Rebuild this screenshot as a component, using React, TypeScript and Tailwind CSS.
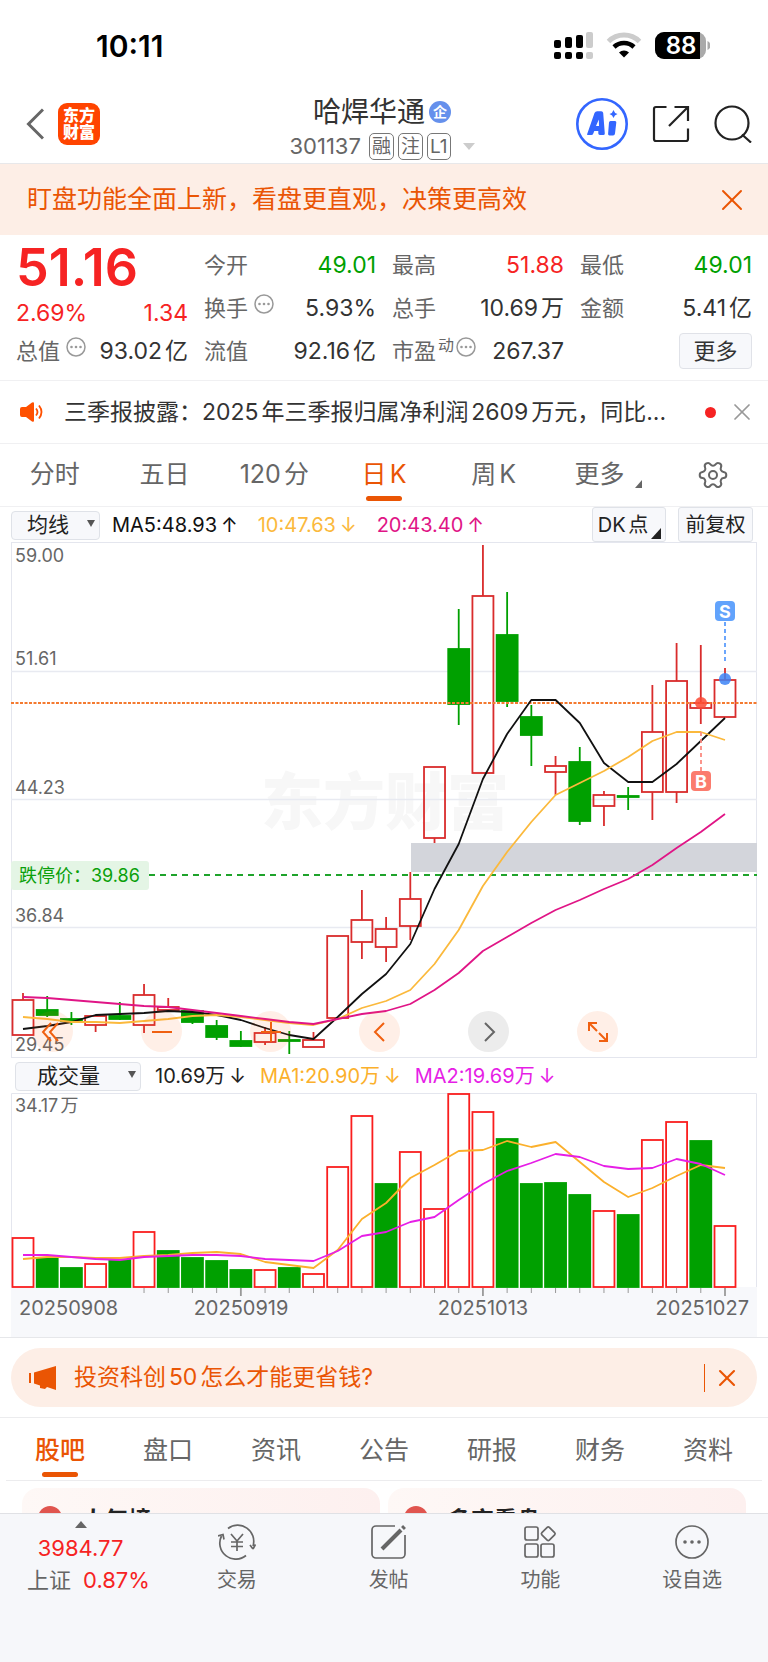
import type { ReactNode } from "react";
import { Settings, X } from "lucide-react";

type Candle = [top: number, bottom: number, high: number, low: number, up: boolean];

const CANDLES: Candle[] = [
  [458, 493, 451, 493, true],
  [468, 473, 454, 475, false],
  [477, 479, 470, 483, false],
  [474, 483, 474, 490, true],
  [474, 477, 460, 478, false],
  [453, 483, 442, 491, true],
  [465, 468, 456, 470, true],
  [469, 480, 468, 482, false],
  [484, 495, 478, 498, false],
  [499, 504, 489, 505, false],
  [491, 500, 485, 503, true],
  [498, 499, 489, 512, false],
  [498, 505, 490, 505, true],
  [394, 476, 394, 476, true],
  [378, 400, 348, 417, true],
  [387, 405, 375, 420, true],
  [357, 384, 330, 398, true],
  [225, 296, 225, 301, true],
  [107, 162, 67, 183, false],
  [54, 231, 3, 231, true],
  [93, 159, 50, 165, false],
  [175, 193, 163, 224, false],
  [224, 230, 214, 253, true],
  [220, 279, 205, 283, false],
  [253, 264, 249, 284, true],
  [254, 255, 245, 268, false],
  [190, 250, 143, 278, true],
  [139, 250, 101, 261, true],
  [161, 166, 103, 182, true],
  [138, 175, 126, 175, true],
];

const MA5 = [
  487, 484, 480, 473, 472, 471, 469, 470, 473, 478, 486, 493, 497, 475, 452, 432, 402, 347, 302, 237,
  192, 158, 158, 181, 221, 240, 240, 222, 199, 176,
];
const MA10 = [
  475, 477, 480, 480, 481, 479, 477, 474, 473, 475, 478, 481, 483, 477, 466, 459, 448, 422, 388, 344,
  310, 280, 253, 241, 229, 215, 199, 190, 190, 198,
];
const MA20 = [
  455, 456, 458, 460, 462, 464, 465, 468, 471, 474, 477, 480, 482, 477, 472, 469, 462, 448, 431, 409,
  395, 381, 368, 358, 347, 337, 323, 306, 290, 272,
];

const VOLUMES: [top: number, up: boolean][] = [
  [145, true], [165, false], [175, false], [171, true], [167, false], [139, true],
  [158, false], [165, false], [168, false], [177, false], [177, true], [175, false],
  [181, true], [74, true], [23, true], [91, false], [59, true], [116, true],
  [1, true], [19, true], [46, false], [91, false], [90, false], [102, false],
  [118, true], [122, false], [47, true], [29, true], [48, false], [133, true],
];
const VMA1 = [
  166, 164, 164, 165, 165, 163, 162, 160, 159, 161, 169, 172, 175, 157, 126, 110, 85, 72, 58, 57, 48,
  54, 49, 69, 89, 104, 95, 83, 72, 75,
];
const VMA2 = [
  162, 162, 164, 166, 167, 164, 163, 162, 162, 163, 166, 167, 168, 158, 143, 139, 129, 124, 107, 91,
  78, 70, 61, 64, 73, 76, 75, 66, 71, 82,
];

const xAt = (i: number) => 12 + (i * 702) / 29;
const toPoints = (ys: number[]) => ys.map((y, i) => `${xAt(i).toFixed(1)},${y}`).join(" ");

function StatusBar() {
  return (
    <div className="flex h-20 items-center justify-between pt-3 pr-[58px] pl-24">
      <span className="text-[30px] font-semibold text-black">10:11</span>
      <svg width="156" height="28" viewBox="0 0 156 28" aria-label="信号和电量">
        <rect x="0" y="8" width="7" height="8" rx="2" />
        <rect x="11" y="5" width="7" height="11" rx="2" />
        <rect x="22" y="3" width="7" height="13" rx="2" />
        <rect x="32" y="0" width="7" height="16" rx="2" fill="#ccc" />
        <rect x="0" y="20" width="7" height="7" rx="2" />
        <rect x="11" y="20" width="7" height="7" rx="2" />
        <rect x="22" y="20" width="7" height="7" rx="2" />
        <rect x="32" y="20" width="7" height="7" rx="2" fill="#ccc" />
        <path d="M54.5 9.5a22 22 0 0 1 31 0" fill="none" stroke="#ccc" strokeWidth="5" />
        <path d="M60 15a14.5 14.5 0 0 1 20 0" fill="none" stroke="#000" strokeWidth="4.5" />
        <path d="M65 20.5a7.5 7.5 0 0 1 10 0l-5 5z" />
        <rect x="101" y="0" width="51" height="27" rx="9" fill="#aaa" />
        <path d="M110 0h36v27h-36a9 9 0 0 1-9-9V9a9 9 0 0 1 9-9z" />
        <path d="M153.500 9q3 1.500 3 4.500t-3 4.500z" fill="#aaa" />
        <text x="127" y="22" textAnchor="middle" fontSize="24" fontWeight="600" fill="#fff">
          88
        </text>
      </svg>
    </div>
  );
}

function Tag({ children }: { children: ReactNode }) {
  return (
    <span className="flex h-[27px] items-center rounded-[5px] border border-[#777] px-[2px] text-[19px] leading-none text-[#666]">
      {children}
    </span>
  );
}

function Header() {
  return (
    <header className="grid h-21 grid-cols-[1fr_auto_1fr] items-center border-b border-[#e8e8ea] pt-1 pr-4 pl-3">
      <div className="flex items-center gap-[14px] pl-[14px]">
        <button aria-label="返回">
          <svg width="18" height="32" viewBox="0 0 18 32" fill="none" stroke="#666" strokeWidth="3">
            <path d="M17 1.500 2.500 16 17 30.500" />
          </svg>
        </button>
        <div className="grid size-[42px] place-content-center rounded-[9px] bg-[#ff4400] text-center text-base leading-[17px] font-black text-white">
          东方
          <br />
          财富
        </div>
      </div>
      <div className="flex flex-col items-center gap-[2px] pt-2">
        <h1 className="flex h-9 items-center gap-1 text-[28px] text-[#333]">
          哈焊华通
          <span className="grid size-[22px] place-content-center rounded-full bg-[#6590ec] text-sm leading-none font-bold text-white">
            企
          </span>
        </h1>
        <div className="flex h-[30px] items-center gap-1 text-[22px] text-[#666]">
          <span className="mr-1">301137</span>
          <Tag>融</Tag>
          <Tag>注</Tag>
          <Tag>L1</Tag>
          <svg className="ml-2" width="12" height="7" viewBox="0 0 12 7" fill="#ccc">
            <path d="M0 0h12L6 7z" />
          </svg>
        </div>
      </div>
      <div className="flex items-center justify-end gap-6">
        <button aria-label="AI">
          <svg width="52" height="52" viewBox="0 0 52 52">
            <circle cx="26" cy="26" r="24.700" fill="none" stroke="#3366ff" strokeWidth="2.600" />
            <path
              fill="#3366ff"
              fillRule="evenodd"
              d="M11 36.500 18.500 15q.8-1.800 2.700-1.800h4q1.800 0 2 1.800l1.600 20.500q0 1.500-1.500 1.500h-3.500q-1.400 0-1.500-1.400V33h-4l-1 2.500q-.5 1.500-2 1.500H12q-1.300 0-1-1.500zM20 28h3l-.2-6.500z"
            />
            <path fill="#3366ff" d="M34.500 23h4.500q1.500 0 1.300 1.500L39 35.500q-.2 2-2 2h-3.500q-1.600 0-1.400-1.700L33 24.500q.2-1.500 1.500-1.500zM37.500 12q.8 3.200 4 4-3.200.8-4 4-.8-3.200-4-4 3.200-.8 4-4z" />
          </svg>
        </button>
        <button aria-label="分享">
          <svg width="38" height="38" viewBox="0 0 38 38" fill="none" stroke="#222" strokeWidth="2.200">
            <path d="M14.500 2H4a2 2 0 0 0-2 2v30a2 2 0 0 0 2 2h30a2 2 0 0 0 2-2V23.500M22.500 2H36v14M36 2 17 21" />
          </svg>
        </button>
        <button aria-label="搜索">
          <svg width="38" height="38" viewBox="0 0 38 38" fill="none" stroke="#222" strokeWidth="2.200">
            <circle cx="18" cy="18" r="16.500" />
            <path d="M28 29.500 37 37.500" />
          </svg>
        </button>
      </div>
    </header>
  );
}

function MoreDots() {
  return (
    <svg className="mb-2" width="20" height="20" viewBox="0 0 20 20" fill="#999">
      <circle cx="10" cy="10" r="9" fill="none" stroke="#999" strokeWidth="1.500" />
      <circle cx="5.500" cy="10" r="1.300" />
      <circle cx="10" cy="10" r="1.300" />
      <circle cx="14.500" cy="10" r="1.300" />
    </svg>
  );
}

function Stat({
  label,
  value,
  color = "text-[#333]",
  dots = false,
  sup,
}: {
  label: string;
  value: string;
  color?: string;
  dots?: boolean;
  sup?: string;
}) {
  return (
    <div className="flex h-[43px] items-center justify-between whitespace-nowrap">
      <span className="flex items-center text-[#666]">
        {label}
        {sup && <span className="mb-3 ml-[2px] text-base">{sup}</span>}
        {dots && (
          <span className={sup ? "ml-[2px]" : "ml-[6px]"}>
            <MoreDots />
          </span>
        )}
      </span>
      <span className={`text-[23px] ${color}`}>{value}</span>
    </div>
  );
}

function Quotes() {
  return (
    <section className="grid grid-cols-4 gap-x-4 border-b border-[#f0f0f2] px-4 py-2 text-[22px] leading-8">
      <div>
        <div className="h-[54px] text-[52px] leading-[50px] font-semibold text-[#f62323]">51.16</div>
        <div className="flex h-8 items-center justify-between text-[23px] text-[#f62323]">
          <span>2.69%</span>
          <span>1.34</span>
        </div>
        <Stat label="总值" value="93.02亿" dots />
      </div>
      <div>
        <Stat label="今开" value="49.01" color="text-[#00a000]" />
        <Stat label="换手" value="5.93%" dots />
        <Stat label="流值" value="92.16亿" />
      </div>
      <div>
        <Stat label="最高" value="51.88" color="text-[#f62323]" />
        <Stat label="总手" value="10.69万" />
        <Stat label="市盈" value="267.37" sup="动" dots />
      </div>
      <div>
        <Stat label="最低" value="49.01" color="text-[#00a000]" />
        <Stat label="金额" value="5.41亿" />
        <div className="flex justify-end pt-1">
          <button className="h-9 w-[73px] rounded-[4px] border border-[#e0e2e8] bg-[#f7f8fb] text-[#333]">
            更多
          </button>
        </div>
      </div>
    </section>
  );
}

function News() {
  return (
    <div className="flex h-[63px] items-center border-b border-[#f0f0f2] pr-3 pl-5">
      <svg className="mr-5 shrink-0" width="24" height="20" viewBox="0 0 24 20" fill="#ff5000">
        <path d="M2 5h4l6-4.500q2-1 2 1v17q0 2-2 1L6 15H2q-2 0-2-2V7q0-2 2-2z" />
        <path d="M16 6.500q3 3.500 0 7M19 3.500q5 6.500 0 13" fill="none" stroke="#ff5000" strokeWidth="1.800" />
      </svg>
      <a href="#news" className="flex-1 truncate text-[23px] text-[#333]">
        三季报披露：2025年三季报归属净利润2609万元，同比...
      </a>
      <span className="mr-3 size-[11px] rounded-full bg-[#f62323]" />
      <button aria-label="关闭公告">
        <X className="size-7 text-[#999]" strokeWidth={1.5} />
      </button>
    </div>
  );
}

function PeriodTabs() {
  const tab = "relative flex items-center justify-center";
  return (
    <nav className="grid h-[63px] grid-cols-7 border-b border-[#f0f0f2] text-[25px] text-[#666]">
      <button className={tab}>分时</button>
      <button className={tab}>五日</button>
      <button className={tab}>120分</button>
      <button className={`${tab} text-[#ea5504]`}>
        日K
        <span className="absolute bottom-[5px] h-[5px] w-9 rounded-full bg-[#ea5504]" />
      </button>
      <button className={tab}>周K</button>
      <button className={`${tab} pr-2`}>
        更多
        <svg className="absolute right-4 bottom-[18px]" width="7" height="8" viewBox="0 0 7 8" fill="#666">
          <path d="M7 0v8H0z" />
        </svg>
      </button>
      <button className={tab} aria-label="设置">
        <Settings className="size-8 rotate-90 text-[#666]" strokeWidth={1.5} />
      </button>
    </nav>
  );
}

function IndicatorSelect({ label, value, wide = false }: { label: string; value: string; wide?: boolean }) {
  return (
    <div className={`relative h-[29px] shrink-0 ${wide ? "w-[126px]" : "w-[89px]"}`}>
      <select
        aria-label={label}
        className={`size-full appearance-none rounded-[4px] border border-[#dfe2e8] bg-[#f7f8fb] text-[21px] leading-[26px] text-[#222] ${
          wide ? "pl-[21px]" : "pl-[15px]"
        }`}
      >
        <option>{value}</option>
      </select>
      <svg
        className="pointer-events-none absolute top-[10px] right-[5px]"
        width="8"
        height="7"
        viewBox="0 0 8 7"
        fill="#555"
      >
        <path d="M0 0h8L4 7z" />
      </svg>
    </div>
  );
}

function Reading({ text, arrow, color }: { text: string; arrow: string; color: string }) {
  return (
    <span className={`flex gap-1 ${color}`}>
      <span>{text}</span>
      <span>{arrow}</span>
    </span>
  );
}

function PriceChart() {
  const round = "grid size-[41px] place-content-center rounded-full bg-[#ff6010]/10 text-[#f06010]";
  const icon = { width: 24, height: 24, viewBox: "0 0 24 24", fill: "none", stroke: "currentColor", strokeWidth: 2 };
  return (
    <div className="relative mx-[11px]">
      <svg className="block h-auto w-full" viewBox="0 0 746 516" fontSize="18" fill="#666">
        <rect x="0.500" y="0.500" width="745" height="515" fill="#fff" stroke="#e4e6ee" />
        <text x="250" y="283" fontSize="62" fontWeight="900" fill="#f7f7f7">
          东方财富
        </text>
        <path d="M0 129.500H746M0 257.500H746M0 385.500H746" stroke="#e8eaf1" strokeWidth="1.500" />
        <rect x="400" y="301" width="346" height="29" fill="#d3d5db" />
        <path d="M138 333H746" stroke="#1fa32b" strokeWidth="2" strokeDasharray="6 5" />
        {CANDLES.map(([top, bottom, high, low, up], i) => {
          const x = xAt(i);
          const color = up ? "#d92c2c" : "#00a000";
          return (
            <g key={i} stroke={color} strokeWidth="1.800">
              <path d={`M${x} ${high}V${top}M${x} ${bottom}V${low}`} />
              <rect x={x - 10.5} y={top} width="21" height={bottom - top} fill={up ? "none" : color} />
            </g>
          );
        })}
        <path d="M0 161H746" stroke="#f47a30" strokeWidth="1.800" strokeDasharray="3 1.500" />
        <g fill="none" strokeWidth="1.800" strokeLinejoin="round">
          <polyline points={toPoints(MA5)} stroke="#111" />
          <polyline points={toPoints(MA10)} stroke="#fbb93c" />
          <polyline points={toPoints(MA20)} stroke="#e01586" />
        </g>
        <text x="4" y="20">59.00</text>
        <text x="4" y="123">51.61</text>
        <text x="4" y="252">44.23</text>
        <text x="4" y="380">36.84</text>
        <text x="4" y="509">29.45</text>
        <rect x="0" y="319" width="138" height="29" rx="3" fill="#e4f5e5" />
        <text x="8" y="340" fill="#0aa00a">
          跌停价：39.86
        </text>
        {/* buy / sell marks */}
        <path d="M714 80V119" stroke="#5c9dfc" strokeWidth="1.800" strokeDasharray="4 3" />
        <circle cx="714" cy="137" r="6" fill="#3c82f6" fillOpacity="0.85" />
        <rect x="704" y="59" width="20" height="20" rx="4" fill="#62a3fc" />
        <path d="M690 190V229" stroke="#fb8a80" strokeWidth="1.800" strokeDasharray="4 3" />
        <circle cx="690" cy="161" r="6" fill="#fb4a34" fillOpacity="0.85" />
        <rect x="680" y="229" width="20" height="20" rx="4" fill="#fb7c6e" />
        <g fill="#fff" fontWeight="700" textAnchor="middle">
          <text x="714" y="76">S</text>
          <text x="690" y="246">B</text>
        </g>
      </svg>
      <div className="absolute bottom-[6px] left-[21px] flex gap-[68px]">
        <button className={round} aria-label="最早">
          <svg {...icon}>
            <path d="M10 3 2 12l8 9M17 3 9 12l8 9" />
          </svg>
        </button>
        <button className={round} aria-label="缩小">
          <svg {...icon}>
            <path d="M2 12h20" />
          </svg>
        </button>
        <button className={round} aria-label="放大">
          <svg {...icon}>
            <path d="M2 12h20M12 2v20" />
          </svg>
        </button>
        <button className={round} aria-label="向前">
          <svg {...icon}>
            <path d="M16 3 7 12l9 9" />
          </svg>
        </button>
        <button className="grid size-[41px] place-content-center rounded-full bg-[#ececec] text-[#666]" aria-label="向后">
          <svg {...icon}>
            <path d="m8 3 9 9-9 9" />
          </svg>
        </button>
        <button className={round} aria-label="全屏">
          <svg {...icon}>
            <path d="M11 3H3v8M3 3l8 8M21 13v8h-8M21 21l-8-8" />
          </svg>
        </button>
      </div>
    </div>
  );
}

function VolumeChart() {
  return (
    <div className="border-b border-[#e6e7ea] px-[11px]">
      <svg className="block h-auto w-full" viewBox="0 0 746 244" fontSize="20" fill="#666">
        <path d="M.5 194V.5H745.500V194" fill="none" stroke="#e4e6ee" />
        <rect x="0" y="194" width="746" height="50" fill="#f7f8fb" />
        <text className="[text-autospace:normal]" x="4" y="19" fontSize="18">
          34.17万
        </text>
        {VOLUMES.map(([top, up], i) => (
          <g key={i}>
            <rect
              x={xAt(i) - 10.5}
              y={top}
              width="21"
              height={194 - top}
              fill={up ? "#fff" : "#00a000"}
              stroke={up ? "#fa1e1e" : "#00a000"}
              strokeWidth="1.800"
            />
            {i > 4 && (
              <path
                d={`M${xAt(i)} 195v${i % 10 === 9 ? 8 : 5}`}
                stroke="#999"
                strokeWidth={i % 10 === 9 ? 1.8 : 1}
              />
            )}
          </g>
        ))}
        <g fill="none" strokeWidth="1.800" strokeLinejoin="round">
          <polyline points={toPoints(VMA1)} stroke="#fbb02c" />
          <polyline points={toPoints(VMA2)} stroke="#e61ee6" />
        </g>
        <text x="8" y="222">20250908</text>
        <text x="230" y="222" textAnchor="middle">20250919</text>
        <text x="472" y="222" textAnchor="middle">20251013</text>
        <text x="738" y="222" textAnchor="end">20251027</text>
      </svg>
    </div>
  );
}

function ChartSection() {
  const chip = "relative h-[35px] rounded-[3px] border border-[#dfe2e8] bg-[#f7f8fb] text-[20px] text-[#222]";
  return (
    <section>
      <div className="flex h-[35px] items-center pr-[15px] pl-[11px] text-[20px] whitespace-nowrap">
        <IndicatorSelect label="主图指标" value="均线" />
        <div className="ml-3 flex flex-1 gap-5">
          <Reading text="MA5:48.93" arrow="↑" color="text-[#111]" />
          <Reading text="10:47.63" arrow="↓" color="text-[#fbb93c]" />
          <Reading text="20:43.40" arrow="↑" color="text-[#e01586]" />
        </div>
        <button className={`${chip} mr-3 w-[74px] pr-3 [text-autospace:normal]`}>
          DK点
          <svg className="absolute right-1 bottom-[2px]" width="10" height="11" viewBox="0 0 10 11" fill="#222">
            <path d="M10 0v11H0z" />
          </svg>
        </button>
        <button className={`${chip} w-[75px]`}>前复权</button>
      </div>
      <PriceChart />
      <div className="flex h-[35px] items-center gap-[14px] pl-[15px] text-[20px] whitespace-nowrap">
        <IndicatorSelect label="副图指标" value="成交量" wide />
        <Reading text="10.69万" arrow="↓" color="text-[#222]" />
        <Reading text="MA1:20.90万" arrow="↓" color="text-[#fbb02c]" />
        <Reading text="MA2:19.69万" arrow="↓" color="text-[#e61ee6]" />
      </div>
      <VolumeChart />
    </section>
  );
}

function Promo() {
  return (
    <div className="border-b border-[#ececee] px-[11px] py-[10px]">
      <div className="flex h-[59px] items-center rounded-full bg-[#fdeee6] pr-4 pl-[18px] text-[#ea5504]">
        <svg width="27" height="24" viewBox="0 0 27 24" fill="#ea5504">
          <path d="M0 7h2v10H0zM5 6.500 27 0v24l-9-3-2 2-5-1v-2.500L5 17.500z" />
        </svg>
        <a href="#promo" className="ml-[18px] flex-1 text-[23px] [text-autospace:normal]">
          投资科创50怎么才能更省钱?
        </a>
        <span className="mr-2 h-7 w-px bg-[#ea5504]" />
        <button aria-label="关闭推广">
          <X className="size-7" strokeWidth={1.8} />
        </button>
      </div>
    </div>
  );
}

function InfoTabs() {
  return (
    <nav className="mx-[6px] grid h-[63px] grid-cols-7 border-b border-[#ececee] text-[25px] text-[#666]">
      <button className="relative flex items-center justify-center pt-1 font-medium text-[#ea5504]">
        股吧
        <span className="absolute bottom-[3px] h-[5px] w-9 rounded-full bg-[#ea5504]" />
      </button>
      {["盘口", "资讯", "公告", "研报", "财务", "资料"].map((name) => (
        <button key={name} className="pt-1">
          {name}
        </button>
      ))}
    </nav>
  );
}

function BoardCards() {
  return (
    <div className="grid h-8 grid-cols-2 gap-2 overflow-hidden px-[22px] pt-[7px]">
      {["人气榜", "多空看盘"].map((title) => (
        <div
          key={title}
          className="flex h-20 items-start gap-5 rounded-2xl bg-linear-to-r from-[#fef8f6] to-[#fdf0ef] px-4 pt-[18px]"
        >
          <span className="size-6 rounded-full bg-[#e0554f]" />
          <span className="text-[23px] leading-7 font-bold text-[#222]">{title}</span>
        </div>
      ))}
    </div>
  );
}

function NavItem({ label, children }: { label: string; children: ReactNode }) {
  return (
    <button className="flex flex-1 flex-col items-center gap-[7px] pt-[10px]">
      <svg width="38" height="36" viewBox="0 0 38 36" fill="none" stroke="#666" strokeWidth="1.700">
        {children}
      </svg>
      <span className="text-[20px] leading-[26px]">{label}</span>
    </button>
  );
}

function BottomBar() {
  return (
    <footer className="flex h-[149px] items-start border-t border-[#e0e1e5] bg-[#f6f7fa] text-[#666]">
      <button className="flex w-[161px] flex-col items-center pt-[7px] text-[22px] leading-8">
        <svg width="12" height="7" viewBox="0 0 12 7" fill="#666">
          <path d="M6 0l6 7H0z" />
        </svg>
        <span className="mt-1 text-[#f62323]">3984.77</span>
        <span className="flex gap-3 pl-4">
          上证 <span className="text-[#f62323]">0.87%</span>
        </span>
      </button>
      <NavItem label="交易">
        <path d="M10 4.500A16 16 0 0 1 35 22M35 25l-3-4M35 25l2.500-4.500M28 31.500A16 16 0 0 1 3.500 12M0 12l5-1.500 1 5" />
        <path d="m13 10 6 7 6-7M19 17v10M13 18h12M13 22.500h12" />
      </NavItem>
      <NavItem label="发帖">
        <path d="M25 2H6a4 4 0 0 0-4 4v24a4 4 0 0 0 4 4h25a4 4 0 0 0 4-4V11" />
        <path d="M12 25 31 6" strokeWidth="4" />
        <path d="m32.500 4.500 2-2" strokeWidth="4" />
      </NavItem>
      <NavItem label="功能">
        <rect x="4" y="3" width="13" height="13" rx="2" />
        <rect x="4" y="20" width="13" height="13" rx="2" />
        <rect x="20" y="20" width="13" height="13" rx="2" />
        <rect x="22" y="4.500" width="10.500" height="10.500" rx="1.500" transform="rotate(45 27.250 9.750)" />
      </NavItem>
      <NavItem label="设自选">
        <circle cx="19" cy="18" r="16" />
        <g fill="#666" stroke="none">
          <circle cx="12" cy="18" r="1.800" />
          <circle cx="19" cy="18" r="1.800" />
          <circle cx="26" cy="18" r="1.800" />
        </g>
      </NavItem>
    </footer>
  );
}

export default function App() {
  return (
    <main className="min-h-screen bg-white font-[Inter,'Noto_Sans_CJK_SC',sans-serif]">
      <StatusBar />
      <Header />
      <div className="flex h-[71px] items-center justify-between bg-[#fdeee6] pr-[18px] pl-[27px] text-[25px] text-[#ea5504]">
        <span>盯盘功能全面上新，看盘更直观，决策更高效</span>
        <button aria-label="关闭提示">
          <X className="size-9" strokeWidth={1.3} />
        </button>
      </div>
      <div className="[text-autospace:normal]">
        <Quotes />
        <News />
        <PeriodTabs />
      </div>
      <ChartSection />
      <Promo />
      <InfoTabs />
      <BoardCards />
      <BottomBar />
    </main>
  );
}
